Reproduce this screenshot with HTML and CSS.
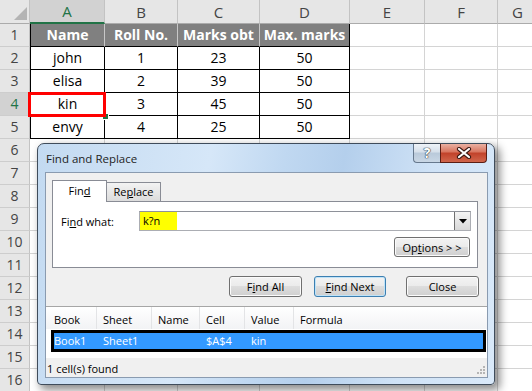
FILE: index.html
```html
<!DOCTYPE html>
<html lang="en">
  <head>
    <meta charset="UTF-8" />
    <title>Find and Replace</title>
    <link rel="stylesheet" href="styles.css">
  </head>
  <body>
    <table class="sheet">
      <colgroup>
        <col style="width: 30px">
        <col style="width: 75px">
        <col style="width: 73px">
        <col style="width: 82px">
        <col style="width: 90px">
        <col style="width: 75px">
        <col style="width: 73px">
        <col style="width: 40px">
      </colgroup>
      <tr class="col-heads">
        <th class="corner">
          <svg width="29" height="23" viewBox="0 0 29 23"><polygon points="27,7 27,20 14,20" fill="#b4b4b4" /></svg>
        </th>
        <th class="sel">A</th><th>B</th><th>C</th><th>D</th><th>E</th><th>F</th><th>G</th>
      </tr>
      <tr>
        <th class="rh">1</th>
        <td class="hd first">Name</td><td class="hd">Roll No.</td><td class="hd">Marks obt</td><td class="hd last">Max. marks</td>
        <td></td><td></td><td></td>
      </tr>
      <tr>
        <th class="rh">2</th>
        <td class="d first">john</td><td class="d">1</td><td class="d">23</td><td class="d">50</td>
        <td></td><td></td><td></td>
      </tr>
      <tr>
        <th class="rh">3</th>
        <td class="d first">elisa</td><td class="d">2</td><td class="d">39</td><td class="d">50</td>
        <td></td><td></td><td></td>
      </tr>
      <tr>
        <th class="rh active">4</th>
        <td class="d first found">kin</td><td class="d">3</td><td class="d">45</td><td class="d">50</td>
        <td></td><td></td><td></td>
      </tr>
      <tr>
        <th class="rh">5</th>
        <td class="d first">envy</td><td class="d">4</td><td class="d">25</td><td class="d">50</td>
        <td></td><td></td><td></td>
      </tr>
      <tr><th class="rh">6</th><td></td><td></td><td></td><td></td><td></td><td></td><td></td></tr>
      <tr><th class="rh">7</th><td></td><td></td><td></td><td></td><td></td><td></td><td></td></tr>
      <tr><th class="rh">8</th><td></td><td></td><td></td><td></td><td></td><td></td><td></td></tr>
      <tr><th class="rh">9</th><td></td><td></td><td></td><td></td><td></td><td></td><td></td></tr>
      <tr><th class="rh">10</th><td></td><td></td><td></td><td></td><td></td><td></td><td></td></tr>
      <tr><th class="rh">11</th><td></td><td></td><td></td><td></td><td></td><td></td><td></td></tr>
      <tr><th class="rh">12</th><td></td><td></td><td></td><td></td><td></td><td></td><td></td></tr>
      <tr><th class="rh">13</th><td></td><td></td><td></td><td></td><td></td><td></td><td></td></tr>
      <tr><th class="rh">14</th><td></td><td></td><td></td><td></td><td></td><td></td><td></td></tr>
      <tr><th class="rh">15</th><td></td><td></td><td></td><td></td><td></td><td></td><td></td></tr>
      <tr><th class="rh">16</th><td></td><td></td><td></td><td></td><td></td><td></td><td></td></tr>
    </table>

    <div class="dialog">
      <div class="titlebar">
        <div class="title">Find and Replace</div>
        <div class="caption">
          <div class="cap-help">?</div>
          <div class="cap-close">
            <svg width="16" height="12" viewBox="0 0 16 12">
              <path d="M3 2 L13 10 M13 2 L3 10" stroke="#3a1712" stroke-width="4.2" stroke-linecap="round" />
              <path d="M3 2 L13 10 M13 2 L3 10" stroke="#fff" stroke-width="2.2" stroke-linecap="round" />
            </svg>
          </div>
        </div>
      </div>

      <div class="client">
        <div class="find-area">
          <div class="tabs">
            <div class="tab tab-on">Fin<u>d</u></div>
            <div class="tab">Re<u>p</u>lace</div>
          </div>
          <div class="panel">
            <div class="find-row">
              <span class="label">Fi<u>n</u>d what:</span>
              <div class="combo">
                <span class="combo-val">k?n</span>
                <span class="combo-drop">
                  <svg width="8" height="5" viewBox="0 0 8 5"><polygon points="0,0 8,0 4,4.5" fill="#000" /></svg>
                </span>
              </div>
            </div>
            <div class="opt-row">
              <button class="btn btn-options">Op<u>t</u>ions &gt; &gt;</button>
            </div>
          </div>
        </div>

        <div class="actions">
          <button class="btn">F<u>i</u>nd All</button>
          <button class="btn btn-default"><u>F</u>ind Next</button>
          <button class="btn">Close</button>
        </div>

        <div class="results">
          <div class="res-head">
            <span>Book</span><span>Sheet</span><span>Name</span><span>Cell</span><span>Value</span><span>Formula</span>
          </div>
          <div class="res-row">
            <span>Book1</span><span>Sheet1</span><span></span><span>$A$4</span><span>kin</span><span></span>
          </div>
        </div>

        <div class="status">
          <span>1 cell(s) found</span>
          <svg class="grip" width="10" height="10" viewBox="0 0 10 10">
            <rect x="8" y="0" width="2" height="2" fill="#b5b5b5" />
            <rect x="5" y="3" width="2" height="2" fill="#b5b5b5" />
            <rect x="8" y="3" width="2" height="2" fill="#b5b5b5" />
            <rect x="2" y="6" width="2" height="2" fill="#b5b5b5" />
            <rect x="5" y="6" width="2" height="2" fill="#b5b5b5" />
            <rect x="8" y="6" width="2" height="2" fill="#b5b5b5" />
          </svg>
        </div>
      </div>
    </div>
  </body>
</html>
```

FILE: styles.css
```css
*,
*::before,
*::after {
  box-sizing: border-box;
}

html,
body {
  margin: 0;
  padding: 0;
  overflow: hidden;
}

body {
  width: 532px;
  height: 391px;
  position: relative;
  background: #fff;
  font-family: 'Open Sans', 'Liberation Sans', Arial, sans-serif;
}

/* spreadsheet */

.sheet {
  border-collapse: separate;
  border-spacing: 0;
  table-layout: fixed;
  width: 538px;
  font-size: 14px;
  color: #000;
}

.sheet tr {
  height: 23px;
}

.sheet th,
.sheet td {
  padding: 0;
  border-right: 1px solid #d4d4d4;
  border-bottom: 1px solid #d4d4d4;
  text-align: center;
  white-space: nowrap;
  overflow: hidden;
  font-weight: normal;
  line-height: 20px;
}

.sheet .col-heads {
  height: 24px;
}

.sheet .col-heads th {
  background: #e6e6e6;
  color: #444;
  font-size: 15px;
  border-right-color: #c3c3c3;
  border-bottom-color: #ababab;
}

.sheet .col-heads th.sel {
  background: #d2d2d2;
  color: #217346;
  border-bottom: 2px solid #217346;
}

.sheet .col-heads th.corner {
  padding: 0;
  line-height: 0;
  vertical-align: top;
}

.sheet th.rh {
  background: #e6e6e6;
  color: #444;
  border-right-color: #c3c3c3;
  border-bottom-color: #cdcdcd;
}

.sheet th.rh.active {
  background: #d2d2d2;
  color: #217346;
}

.sheet td.hd {
  background: #808080;
  color: #fff;
  font-weight: 700;
  border-right-color: #c8c8c8;
  border-bottom-color: #000;
}

.sheet td.d,
.sheet td.hd.last {
  border-right-color: #000;
  border-bottom-color: #000;
}

.sheet td.first {
  border-left: 1px solid #000;
}

.sheet td.found {
  position: relative;
  overflow: visible;
}

.sheet td.found::before {
  content: '';
  position: absolute;
  left: 71px;
  top: 20px;
  width: 7px;
  height: 7px;
  background: #217346;
  border: 1px solid #fff;
}

.sheet td.found::after {
  content: '';
  position: absolute;
  left: -3px;
  top: -1px;
  width: 78px;
  height: 25px;
  border: 3px solid #ff0000;
}

/* dialog */

.dialog {
  position: absolute;
  left: 37px;
  top: 143px;
  width: 458px;
  height: 242px;
  border: 1px solid #3f4c5b;
  border-radius: 7px 7px 4px 4px;
  padding: 0 6px 6px 7px;
  display: flex;
  flex-direction: column;
  background: linear-gradient(100deg, #c3daf1 0%, #d6e7f8 35%, #c0d8f1 50%, #b4cfec 62%, #cfe2f6 80%, #d9e9f9 100%);
  box-shadow: 4px 4px 9px 1px rgba(0, 0, 0, 0.45);
  font-size: 11px;
  color: #000;
}

.titlebar {
  height: 28px;
  display: flex;
  align-items: center;
}

.title {
  flex: 1;
  padding-left: 1px;
  font-size: 11.5px;
  color: #1e1e1e;
}

.caption {
  align-self: flex-start;
  display: flex;
  height: 19px;
  margin-right: 1px;
}

.cap-help {
  width: 27px;
  border: 1px solid #66788d;
  border-top: none;
  border-right: none;
  border-radius: 0 0 0 4px;
  background: linear-gradient(#eef3f8 0%, #d5dfea 45%, #b9c9da 50%, #c9d7e5 100%);
  text-align: center;
  font-size: 14px;
  font-weight: 700;
  line-height: 17px;
  color: #fff;
  text-shadow: 0 0 1px #2c3a48, 0 0 1px #2c3a48, 0 0 1px #2c3a48;
}

.cap-close {
  width: 47px;
  border: 1px solid #5b1e14;
  border-top: none;
  border-radius: 0 0 4px 0;
  background: linear-gradient(#eab0a2 0%, #d97862 42%, #c2432b 52%, #d0664c 100%);
  display: flex;
  align-items: center;
  justify-content: center;
}

.client {
  flex: 1;
  background: #f0f0f0;
  border: 1px solid #8a9bb0;
  display: flex;
  flex-direction: column;
}

.find-area {
  padding: 7px 9px 0 6px;
}

.tabs {
  display: flex;
  align-items: flex-end;
}

.tab {
  width: 54px;
  height: 19px;
  border: 1px solid #898c95;
  border-bottom: none;
  border-left: none;
  background: linear-gradient(#f3f3f3, #dcdcdc);
  text-align: center;
  line-height: 18px;
}

.tab-on {
  position: relative;
  z-index: 1;
  width: 55px;
  height: 22px;
  margin-bottom: -1px;
  border-left: 1px solid #898c95;
  background: #fff;
  line-height: 20px;
}

.panel {
  height: 67px;
  background: #fff;
  border: 1px solid #898c95;
  padding: 9px 6px 0 8px;
}

.find-row {
  display: flex;
  align-items: center;
}

.label {
  width: 78px;
}

.combo {
  flex: 1;
  height: 20px;
  display: flex;
  border: 1px solid #abadb3;
  border-top-color: #8e9199;
  background: #fff;
}

.combo-val {
  width: 37px;
  background: #ffff00;
  padding-left: 3px;
  line-height: 18px;
}

.combo-drop {
  margin-left: auto;
  width: 16px;
  border-left: 1px solid #707070;
  background: linear-gradient(#f4f4f4, #d8d8d8);
  display: flex;
  align-items: center;
  justify-content: center;
}

.opt-row {
  display: flex;
  justify-content: flex-end;
  padding-top: 6px;
  padding-right: 1px;
}

.btn {
  height: 21px;
  width: 73px;
  padding: 0;
  border: 1px solid #707070;
  border-radius: 3px;
  background: linear-gradient(#f3f3f3 0%, #ebebeb 48%, #dddddd 50%, #cfcfcf 100%);
  box-shadow: inset 0 0 0 1px #fbfbfb;
  font-family: inherit;
  font-size: 11px;
  color: #000;
}

.btn-options {
  width: 76px;
  height: 20px;
}

.btn-default {
  width: 72px;
  border-color: #3c7fb1;
  box-shadow: inset 0 0 0 1px #bfe3f8;
}

.actions {
  display: flex;
  justify-content: flex-end;
  gap: 12px;
  padding: 8px 8px 0 0;
  height: 38px;
}

.actions .btn-default {
  margin-right: 8px;
}

.results {
  height: 52px;
  background: #fff;
  border-top: 1px solid #a6a6a6;
}

.res-head {
  display: grid;
  grid-template-columns: 51px 55px 48px 45px 49px 1fr;
  height: 22px;
  background: linear-gradient(#ffffff, #f2f3f5);
}

.res-head span {
  border-right: 1px solid #e3e4e6;
  padding: 5px 0 0 6px;
  line-height: 16px;
}

.res-head span:first-child {
  padding-left: 8px;
}

.res-head span:last-child {
  border-right: none;
}

.res-row {
  display: grid;
  grid-template-columns: 43px 55px 48px 45px 49px 1fr;
  height: 22px;
  margin: 1px 1px 0 5px;
  border: 3px solid #000;
  background: #3399ff;
  color: #fff;
}

.res-row span {
  padding-left: 6px;
  line-height: 16px;
}

.res-row span:first-child {
  padding-left: 0;
}

.status {
  flex: 1;
  position: relative;
  display: flex;
  align-items: center;
  padding: 2px 0 0 1px;
}

.grip {
  position: absolute;
  right: 2px;
  bottom: 1px;
}
```
